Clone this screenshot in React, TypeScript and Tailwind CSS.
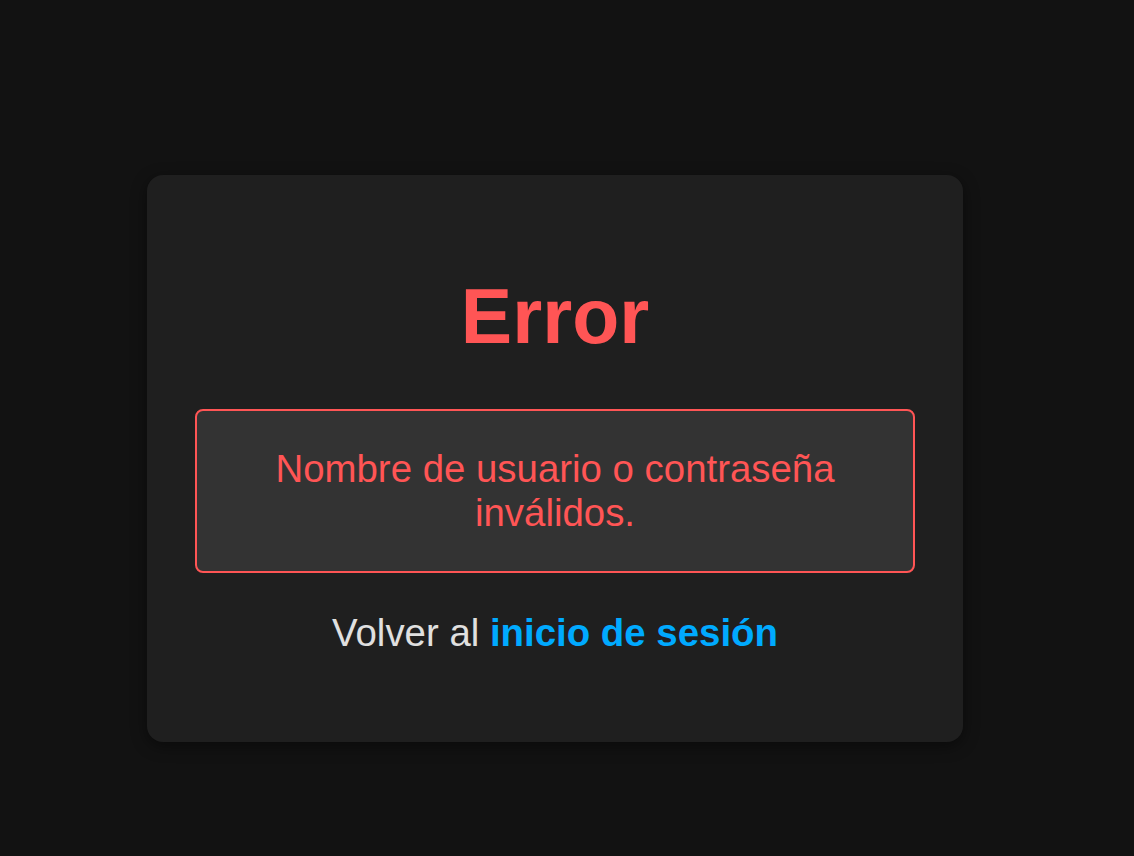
const App = () => {
  return (
    <main
      className="flex min-h-screen justify-center bg-[#121212] pr-[24px] pt-[175px]"
      style={{ fontFamily: '"Liberation Sans", Arial, sans-serif' }}
    >
      <section className="h-fit w-[816px] rounded-2xl bg-[#1f1f1f] px-12 pb-[87px] pt-[97px] text-center shadow-[0_4px_16px_rgba(0,0,0,0.45)]">
        <h1 className="text-[77px] font-bold leading-[1.15] text-[#ff5555]">
          Error
        </h1>

        <div className="mt-[48px] rounded-lg border-2 border-[#ff5555] bg-[#333333] px-9 py-9">
          <p className="text-[38.4px] leading-[44px] text-[#ff5555]">
            Nombre de usuario o contraseña inválidos.
          </p>
        </div>

        <p className="mt-[38px] text-[38.4px] leading-[44px] text-[#e0e0e0]">
          Volver al{" "}
          <a href="#" className="font-bold text-[#00aaff]">
            inicio de sesión
          </a>
        </p>
      </section>
    </main>
  );
};

export default App;
